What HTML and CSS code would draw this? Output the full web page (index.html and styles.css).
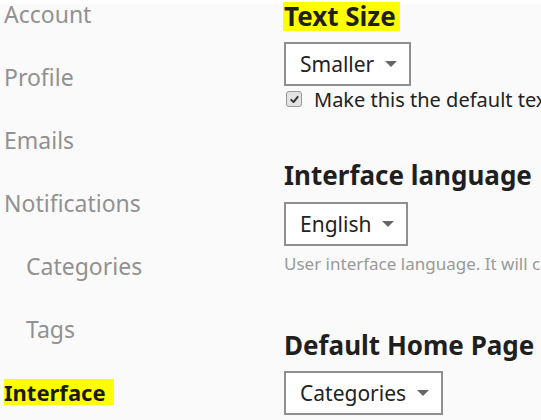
FILE: index.html
```html
<!DOCTYPE html>
<html lang="en">
<head>
<meta charset="utf-8">
<title>Interface</title>
<link rel="stylesheet" href="styles.css">
</head>
<body>
<div class="topband"></div>
<div class="layout">
  <nav class="nav">
    <a class="nav-item">Account</a>
    <a class="nav-item">Profile</a>
    <a class="nav-item">Emails</a>
    <a class="nav-item">Notifications</a>
    <a class="nav-item sub">Categories</a>
    <a class="nav-item sub">Tags</a>
    <a class="nav-item active"><span class="mark">Interface</span></a>
  </nav>
  <main class="content">
    <section class="group first">
      <h2 class="heading"><span class="mark">Text Size</span></h2>
      <div class="select"><span class="select-label">Smaller</span><span class="caret"></span></div>
      <label class="check-row"><span class="checkbox"><svg viewBox="0 0 16 16" width="16" height="16"><path d="M4 8.5 L6.8 11.2 L12 4.8" fill="none" stroke="#333" stroke-width="2.4" stroke-linecap="round" stroke-linejoin="round"/></svg></span><span class="check-text">Make this the default text size</span></label>
    </section>
    <section class="group second">
      <h2 class="heading">Interface language</h2>
      <div class="select"><span class="select-label">English</span><span class="caret"></span></div>
      <p class="help">User interface language. It will change when you refresh the page.</p>
    </section>
    <section class="group third">
      <h2 class="heading">Default Home Page</h2>
      <div class="select"><span class="select-label">Categories</span><span class="caret"></span></div>
    </section>
  </main>
</div>
</body>
</html>
```
FILE: styles.css
```css
html, body {
  margin: 0;
  padding: 0;
}
body {
  background: #fafafa;
  font-family: "Noto Sans", "Open Sans", sans-serif;
  color: #222;
  width: 541px;
  height: 420px;
  overflow: hidden;
  position: relative;
}
.topband {
  position: absolute;
  top: 0;
  left: 0;
  right: 0;
  height: 4px;
  background: #ffffff;
  z-index: -1;
}
.layout {
  display: flex;
  white-space: nowrap;
}
.nav {
  width: 280px;
  padding-left: 4px;
  display: flex;
  flex-direction: column;
  gap: 35px;
  flex-shrink: 0;
}
.nav-item {
  font-size: 23px;
  line-height: 28px;
  color: #919191;
  display: block;
}
.nav-item.sub {
  padding-left: 22px;
}
.nav-item.active {
  color: #1a1a1a;
  font-weight: 700;
  font-size: 22px;
}
.nav-item.active .mark {
  display: inline-block;
  background: #ffff00;
  padding: 0 8px 0 0;
  line-height: 26px;
  margin-top: 1px;
}
.content {
  display: flex;
  flex-direction: column;
  flex: 1;
  min-width: 0;
}
.group {
  display: flex;
  flex-direction: column;
  align-items: flex-start;
}
.group.first { margin-top: 1px; }
.group.second { margin-top: 49px; }
.group.third { margin-top: 56px; }
.heading {
  margin: 0 0 11px 0;
  font-size: 26px;
  line-height: 30px;
  font-weight: 700;
  color: #1f1f1f;
}
.group.second .heading { margin-bottom: 12px; }
.heading .mark {
  display: inline-block;
  background: #ffff00;
  margin-left: -1px;
  padding: 0 4px 0 1px;
  line-height: 29px;
}
.select {
  box-sizing: border-box;
  height: 44px;
  border: 2px solid #8f8f8f;
  background: #ffffff;
  display: flex;
  align-items: center;
  padding: 0 12px 0 14px;
  gap: 11px;
}
.select-label {
  font-size: 21px;
  color: #222;
}
.caret {
  width: 0;
  height: 0;
  border-left: 6px solid transparent;
  border-right: 6px solid transparent;
  border-top: 6px solid #666;
}
.check-row {
  display: flex;
  align-items: center;
  height: 24px;
  margin-top: 1px;
  padding-left: 2px;
  gap: 12px;
}
.checkbox {
  box-sizing: border-box;
  width: 16px;
  height: 16px;
  border: 1px solid #999;
  border-radius: 3px;
  background: #e3e3e3;
  display: flex;
  align-items: center;
  justify-content: center;
}
.checkbox svg {
  width: 13px;
  height: 13px;
}
.check-text {
  font-size: 20px;
  color: #222;
}
.help {
  margin: 8px 0 0 0;
  font-size: 17px;
  line-height: 20px;
  color: #999;
}
```
